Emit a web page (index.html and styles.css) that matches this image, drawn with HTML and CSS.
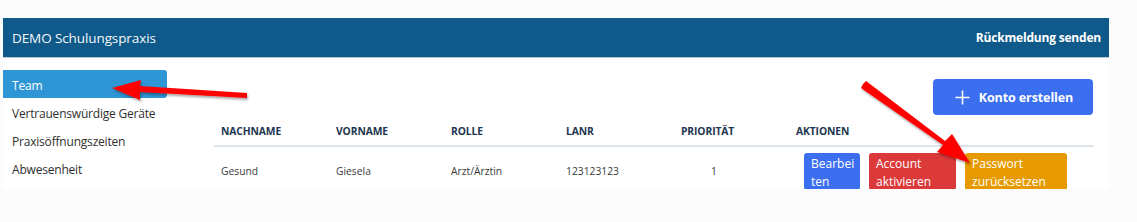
FILE: index.html
```html
<!DOCTYPE html>
<html lang="de">
<head>
<meta charset="utf-8">
<title>DEMO Schulungspraxis</title>
<link rel="stylesheet" href="styles.css">
</head>
<body>
<div class="app">
  <header class="topbar">
    <div class="brand">DEMO Schulungspraxis</div>
    <a class="feedback">Rückmeldung senden</a>
  </header>
  <div class="panel">
    <nav class="sidebar">
      <a class="nav-item active">Team</a>
      <a class="nav-item">Vertrauenswürdige Geräte</a>
      <a class="nav-item">Praxisöffnungszeiten</a>
      <a class="nav-item">Abwesenheit</a>
    </nav>
    <section class="content">
      <div class="toolbar">
        <button class="btn-create"><svg class="plus" width="15" height="15" viewBox="0 0 15 15"><path d="M7.5 0.5V14.5M0.5 7.5H14.5" stroke="#fff" stroke-width="1.6" fill="none"/></svg>Konto erstellen</button>
      </div>
      <table class="team">
        <thead>
          <tr>
            <th class="c1">Nachname</th>
            <th class="c2">Vorname</th>
            <th class="c3">Rolle</th>
            <th class="c4">LANR</th>
            <th class="c5">Priorität</th>
            <th class="c6">Aktionen</th>
          </tr>
        </thead>
        <tbody>
          <tr>
            <td>Gesund</td>
            <td>Giesela</td>
            <td>Arzt/Ärztin</td>
            <td>123123123</td>
            <td class="prio">1</td>
            <td class="actions">
              <button class="act blue">Bearbei<br>ten</button>
              <button class="act red">Account<br>aktivieren</button>
              <button class="act orange">Passwort<br>zurücksetzen</button>
            </td>
          </tr>
        </tbody>
      </table>
    </section>
  </div>
  <svg class="annot" width="1137" height="222" viewBox="0 0 1137 222">
    <defs>
      <filter id="sh" x="-20%" y="-20%" width="140%" height="140%">
        <feDropShadow dx="1" dy="2" stdDeviation="1.2" flood-color="#000" flood-opacity="0.35"/>
      </filter>
    </defs>
    <g fill="#ff0000" filter="url(#sh)">
      <polygon points="112,88 141,80 140,86 247,93 247,98 140,92 140,100"/>
      <polygon points="863,84 866,81 945,141 952,134 970,163 937,152 943,145 861,88"/>
    </g>
  </svg>
</div>
</body>
</html>
```
FILE: styles.css
```css
* { box-sizing: border-box; }
html, body { margin: 0; padding: 0; }
body {
  background: #fcfcfc;
  font-family: "Open Sans", "Noto Sans", sans-serif;
  color: #333;
}
.app {
  position: relative;
  width: 1137px;
  height: 222px;
  padding: 18px 0 0 3px;
}
.topbar {
  width: 1106px;
  height: 40px;
  background: #0f5a8a;
  border-bottom: 1px solid #b9c3cb;
  display: flex;
  align-items: center;
  justify-content: space-between;
  padding: 0 8px 0 9px;
}
.brand {
  color: #f3f7fa;
  font-size: 13.5px;
  letter-spacing: -0.1px;
}
.feedback {
  color: #fff;
  font-weight: 700;
  font-size: 12px;
  letter-spacing: -0.2px;
}
.panel {
  width: 1106px;
  height: 131px;
  background: #fff;
  display: flex;
  overflow: hidden;
}
.sidebar {
  width: 164px;
  flex: none;
  padding-top: 12px;
  display: flex;
  flex-direction: column;
}
.nav-item {
  height: 28px;
  line-height: 24px;
  padding: 4px 0 0 9px;
  font-size: 12px;
  color: #2f2f2f;
  white-space: nowrap;
  letter-spacing: -0.2px;
}
.nav-item.active {
  background: #2f96d6;
  color: #fff;
  border-radius: 0 3px 3px 0;
}
.content {
  flex: 1;
  padding: 21px 15px 0 47px;
  display: flex;
  flex-direction: column;
}
.toolbar {
  display: flex;
  justify-content: flex-end;
  padding-right: 1px;
}
.btn-create {
  width: 160px;
  height: 36px;
  border: none;
  border-radius: 4px;
  background: #3b6ff0;
  color: #fff;
  font-family: inherit;
  font-weight: 700;
  font-size: 12.5px;
  display: flex;
  align-items: center;
  justify-content: center;
  padding: 0 0 0 2px;
  letter-spacing: -0.1px;
}
.plus {
  margin-right: 9px;
  flex: none;
}
.team {
  border-collapse: collapse;
  width: 880px;
  margin-top: 1px;
  table-layout: fixed;
}
.team th {
  text-align: left;
  font-size: 10.3px;
  font-weight: 700;
  text-transform: uppercase;
  color: #1d3650;
  height: 30px;
  padding: 0 0 0 7px;
  border-bottom: 2px solid #dde4ea;
  vertical-align: middle;
  letter-spacing: -0.1px;
}
.team th.c1, .team th.c2, .team th.c3, .team th.c4, .team th.c5 { width: 115px; }
.team td {
  font-size: 10.3px;
  color: #3a3a3a;
  padding: 6px 0 0 7px;
  vertical-align: top;
  line-height: 36px;
}
.team td.prio { padding-left: 37px; }
.team td.actions {
  padding-left: 15px;
  line-height: normal;
  display: flex;
  gap: 9px;
}
.act {
  border: none;
  border-radius: 3px;
  font-family: inherit;
  font-size: 12px;
  line-height: 18px;
  color: #fff;
  text-align: left;
  padding: 2px 7px 0 7px;
  height: 37px;
  flex: none;
}
.act.blue { background: #3b6ff0; width: 56px; }
.act.red { background: #dc3a3a; width: 87px; }
.act.orange { background: #e69a00; width: 102px; }
.annot {
  position: absolute;
  left: 0;
  top: 0;
  pointer-events: none;
}
```
